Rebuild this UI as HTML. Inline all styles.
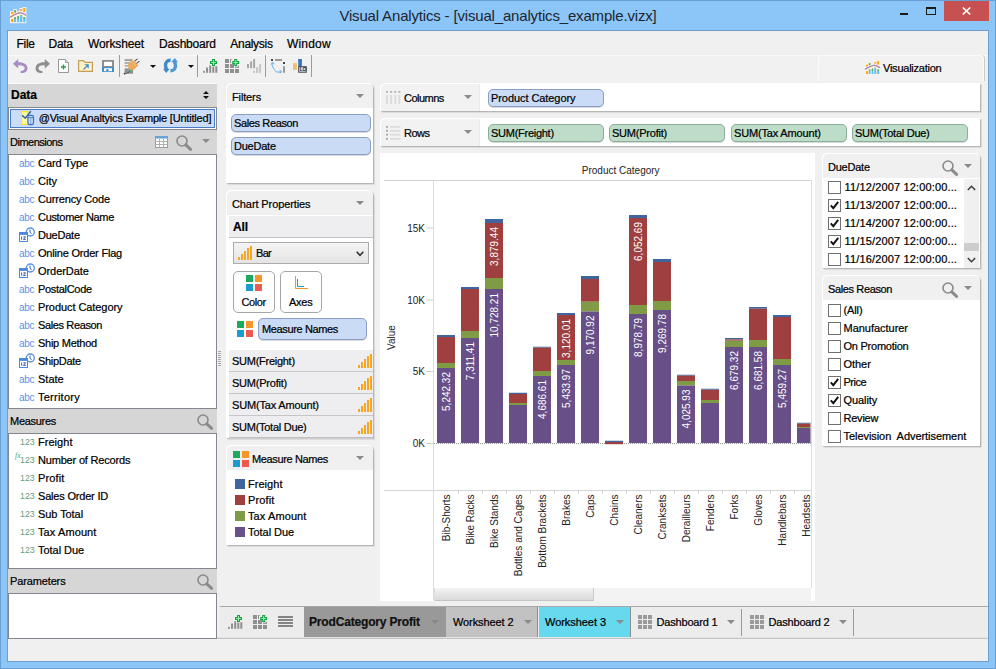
<!DOCTYPE html><html><head><meta charset="utf-8"><title>Visual Analytics</title><style>
*{box-sizing:border-box;margin:0;padding:0}
html,body{width:996px;height:669px;overflow:hidden;background:#8cc5f7}
body{font-family:"Liberation Sans",sans-serif;font-size:11px;color:#000;position:relative;letter-spacing:-0.2px}
.abs{position:absolute}
.t{position:absolute;white-space:pre;line-height:14px;height:14px;-webkit-text-stroke:0.22px currentColor}
#frame{position:absolute;left:0;top:0;width:996px;height:669px;background:#8cc5f7;border:1px solid #6a9fd4}
#client{position:absolute;left:7px;top:30px;width:982px;height:632px;background:#f0f0f0;border:1px solid #6f9ecf;box-shadow:inset 1px 0 0 #faf6f0,inset 0 -1px 0 #faf6f0}
.hdr{position:absolute;background:#d6d6d6}
.listbox{position:absolute;background:#fff;border:1px solid #828790}
.card{position:absolute;background:#fff;border-radius:5px 5px 0 0;box-shadow:1px 1px 1px rgba(0,0,0,.2),2px 2px 1px rgba(0,0,0,.07)}
.card .ch{position:absolute;left:0;top:0;right:0;background:#f0f0f0;border-radius:5px 5px 0 0}
.pill{position:absolute;height:18px;border-radius:5px;border:1px solid #8b9ec6;background:#cadbf6;box-shadow:0 1px 0 rgba(0,0,0,.15)}
.pill.g{border-color:#8dae9b;background:#bdddc9}
.pill span{position:absolute;left:3px;top:1px;line-height:14px;white-space:pre;-webkit-text-stroke:0.22px currentColor}
.abc{position:absolute;color:#5e92e6;font-size:10px;letter-spacing:-0.3px;line-height:14px}
.n123{position:absolute;color:#5fa080;font-size:8.8px;letter-spacing:0;line-height:14px}
.cb{position:absolute;width:13px;height:13px;background:#fff;border:1px solid #707070}
.arr{position:absolute;width:0;height:0;border-left:4px solid transparent;border-right:4px solid transparent;border-top:4px solid #7a7a7a}
svg{position:absolute;overflow:visible}
.ct{font-family:"Liberation Sans",sans-serif;font-size:10px;letter-spacing:0}
</style></head><body>
<div id="frame"></div>
<div class="t" style="left:339px;top:6px;width:318px;text-align:center;font-size:15px;line-height:19px;height:19px;letter-spacing:-0.17px;color:#1c2530;-webkit-text-stroke:0">Visual Analytics - [visual_analytics_example.vizx]</div>
<svg style="left:9.8px;top:6.9px" width="16.3" height="16.2" viewBox="0 0 16.3 16.2"><g fill="#fdf6ec"><rect x="0" y="4.2" width="3.6" height="12"/><rect x="3.4" y="2.1" width="3.4" height="14.1"/><rect x="6.6" y="4.4" width="3" height="11.8"/><rect x="9.4" y="1.1" width="3.3" height="15.1"/><rect x="12.5" y="0" width="3.8" height="16.2"/></g>
<g fill="#ffa514"><rect x="1" y="5" width="2.3" height="2"/><rect x="1" y="12" width="2.3" height="3.2"/><rect x="10.1" y="2.1" width="2.1" height="1.8"/><rect x="13.2" y="0.9" width="2.2" height="4.1"/></g>
<g fill="#62b06a"><rect x="4.1" y="3.1" width="1.9" height="2.7"/><rect x="4.1" y="10.1" width="1.9" height="2"/><rect x="7.2" y="9.1" width="1.9" height="3"/><rect x="10.1" y="8.2" width="2.1" height="1"/><rect x="13.2" y="10.1" width="2.2" height="2"/></g>
<g fill="#5cc0f8"><rect x="4.1" y="12" width="1.9" height="3.2"/><rect x="7.2" y="12" width="1.9" height="3.2"/><rect x="10.1" y="9.1" width="2.1" height="6.1"/><rect x="13.2" y="12" width="2.2" height="3.2"/></g>
<path d="M0 10.2 Q6 6.4 10 5.7 Q13 5.9 16.3 8.4" fill="none" stroke="#fde3d6" stroke-width="2.2"/>
<path d="M0 10.2 Q6 6.4 10 5.7 Q13 5.9 16.3 8.4" fill="none" stroke="#7f6acb" stroke-width="1.1"/>
<path d="M0 10.2 Q6 6.4 10 5.7 Q13 5.9 16.3 8.4" fill="none" stroke="#f6a98a" stroke-width="1.1" stroke-dasharray="1 1.3"/></svg>
<div class="abs" style="left:900px;top:13px;width:8px;height:2px;background:#1a1a1a"></div>
<div class="abs" style="left:926px;top:7px;width:10px;height:8px;border:1px solid #1a1a1a;border-top-width:2px"></div>
<div class="abs" style="left:944px;top:1px;width:45px;height:20px;background:#c75050"></div>
<svg style="left:962px;top:7px" width="9" height="8" viewBox="0 0 9 8"><path d="M0.8 0.5 L8.2 7.5 M8.2 0.5 L0.8 7.5" stroke="#fff" stroke-width="1.7" fill="none"/></svg>
<div id="client"></div>
<div class="t" style="left:16.5px;top:36px;font-size:12px;line-height:16px;height:16px;letter-spacing:-0.284px">File</div>
<div class="t" style="left:48.6px;top:36px;font-size:12px;line-height:16px;height:16px;letter-spacing:-0.337px">Data</div>
<div class="t" style="left:88px;top:36px;font-size:12px;line-height:16px;height:16px;letter-spacing:-0.126px">Worksheet</div>
<div class="t" style="left:159px;top:36px;font-size:12px;line-height:16px;height:16px;letter-spacing:-0.234px">Dashboard</div>
<div class="t" style="left:230.3px;top:36px;font-size:12px;line-height:16px;height:16px;letter-spacing:-0.298px">Analysis</div>
<div class="t" style="left:287px;top:36px;font-size:12px;line-height:16px;height:16px;letter-spacing:0.187px">Window</div>
<div class="abs" style="left:8px;top:55px;width:980px;height:26px;background:#f1f1f1;border-top:1px solid #fafafa"></div><svg style="left:12px;top:58px" width="17" height="16" viewBox="0 0 17 16">
<path d="M6.2 1 L1 5.8 L6.2 10.6 L6.2 7.4 C10.5 7 13 8.3 12.6 10.6 C12.3 12.4 10.6 13.2 8.6 13 L8.6 15 C12.4 15.4 15.3 13.6 15.4 10.4 C15.5 6.4 11.6 4.1 6.2 4.3 Z" fill="#a98bc4"/></svg>
<svg style="left:34px;top:58px" width="17" height="16" viewBox="0 0 17 16">
<path d="M10.8 1 L16 5.8 L10.8 10.6 L10.8 7.4 C6.5 7 4 8.3 4.4 10.6 C4.7 12.4 6.4 13.2 8.4 13 L8.4 15 C4.6 15.4 1.7 13.6 1.6 10.4 C1.5 6.4 5.4 4.1 10.8 4.3 Z" fill="#8e8e8e"/></svg>
<svg style="left:58px;top:59px" width="12" height="14" viewBox="0 0 12 14">
<path d="M0.5 0.5 H7.5 L10.5 3.5 V13.5 H0.5 Z" fill="#fff" stroke="#9a9a9a"/><path d="M7.5 0.5 V3.5 H10.5" fill="#e8e8e8" stroke="#9a9a9a"/>
<path d="M5.5 5.5 V10.5 M3 8 H8" stroke="#2e9a3c" stroke-width="1.4"/></svg>
<svg style="left:78px;top:60px" width="16" height="12" viewBox="0 0 16 12">
<path d="M0.6 0.6 H5.5 L7 2.4 H14.4 V11.4 H0.6 Z" fill="#fdf1c9" stroke="#c69c5a" stroke-width="1.2"/>
<path d="M5.5 9.5 L10 5 M6.8 4.8 H10.2 V8.2" stroke="#3f86c5" stroke-width="1.1" fill="none"/></svg>
<svg style="left:102px;top:60px" width="12" height="12" viewBox="0 0 12 12">
<rect x="0" y="0" width="12" height="7" fill="#8e8e8e"/><rect x="2" y="1.8" width="8" height="4.2" rx="0.6" fill="#fff"/>
<path d="M0 7 H12 V12 H0.8 L0 11.2 Z" fill="#3e8fcc"/><rect x="2" y="8.2" width="8" height="3" fill="#fff"/><rect x="4.2" y="9.2" width="2.3" height="2" fill="#3e8fcc"/></svg>
<div class="abs" style="left:119px;top:55px;width:1px;height:22px;background:#9b9b9b"></div>
<svg style="left:123px;top:58px" width="18" height="16" viewBox="0 0 18 16">
<rect x="1.6" y="1.4" width="8" height="1.3" fill="#7c7c7c"/><rect x="1.6" y="4.3" width="5" height="1.3" fill="#8a8a8a"/><rect x="1.6" y="7.2" width="3.4" height="1.3" fill="#9a9a9a"/>
<rect x="1.6" y="10.4" width="8.4" height="5.3" fill="#909090"/>
<path d="M7.4 12.8 L0.9 16" stroke="#4a4a4a" stroke-width="1.5"/><path d="M7.6 12.2 L2 15" stroke="#d8d8d8" stroke-width="0.6"/>
<path d="M11.4 3.4 L14.4 0.9 M13.4 5.6 L16.4 3.1" stroke="#555" stroke-width="1.2"/>
<ellipse cx="9.3" cy="7.6" rx="4.2" ry="4.5" transform="rotate(40 9.3 7.6)" fill="#eba95a"/>
<path d="M8 2.4 L14.6 8.4" stroke="#eba95a" stroke-width="2.4"/><path d="M8.6 3.6 L13.4 8" stroke="#f6d3a2" stroke-width="0.6"/>
<rect x="6.9" y="12.4" width="1.3" height="1.3" fill="#2fd04a"/></svg>
<div class="arr" style="left:150px;top:65px;border-left-width:3px;border-right-width:3px;border-top:3px solid #111"></div>
<svg style="left:163px;top:58px" width="15" height="15" viewBox="0 0 15 15">
<path d="M7.6 2.2 C4 2 2.5 4.8 2.5 7.2 C2.5 8.8 3 10.2 3.9 11.4" fill="none" stroke="#3f8acb" stroke-width="3.4"/>
<path d="M0 10.8 H6.8 L3.2 14.9 Z" fill="#3f8acb"/>
<path d="M7.4 12.8 C11 13 12.5 10.2 12.5 7.8 C12.5 6.2 12 4.8 11.1 3.6" fill="none" stroke="#4f97d4" stroke-width="3.4"/>
<path d="M15 4.2 H8.2 L11.8 0.1 Z" fill="#4f97d4"/></svg>
<div class="arr" style="left:188px;top:65px;border-left-width:3px;border-right-width:3px;border-top:3px solid #111"></div>
<div class="abs" style="left:197px;top:55px;width:1px;height:22px;background:#9b9b9b"></div>
<svg style="left:203px;top:59px" width="15" height="14" viewBox="0 0 15 14">
<g fill="#8f8f8f"><rect x="0" y="11.8" width="1.8" height="2"/><rect x="3" y="8.5" width="2" height="5.3"/><rect x="6.2" y="6.4" width="2" height="7.4"/><rect x="9.3" y="7.6" width="2" height="6.2"/><rect x="12.3" y="7.2" width="2" height="6.6"/></g>
<path d="M10.5 0.0 V7.0 M7.0 3.5 H14.0" stroke="#17a046" stroke-width="3"/><path d="M10.5 1.1 V5.9 M8.1 3.5 H12.9" stroke="#8cf0a2" stroke-width="1.1"/></svg>
<svg style="left:225px;top:59px" width="15" height="14" viewBox="0 0 15 14">
<g fill="#8f8f8f"><rect x="0" y="0" width="4" height="4"/><rect x="5" y="0" width="1.6" height="1"/><rect x="5" y="0" width="1" height="4"/><rect x="0" y="5" width="4" height="4"/><rect x="5" y="5" width="4" height="4"/><rect x="10" y="7.6" width="4" height="1.2"/><rect x="13" y="6.8" width="1" height="2"/><rect x="0" y="10" width="4" height="4"/><rect x="5" y="10" width="4" height="4"/><rect x="10" y="10" width="4" height="4"/></g>
<path d="M10.7 0.0 V7.0 M7.199999999999999 3.5 H14.2" stroke="#17a046" stroke-width="3"/><path d="M10.7 1.1 V5.9 M8.299999999999999 3.5 H13.1" stroke="#8cf0a2" stroke-width="1.1"/></svg>
<svg style="left:247px;top:59px" width="15" height="14" viewBox="0 0 15 14">
<g fill="#a6a6a6"><rect x="0" y="5" width="2" height="4.2"/><rect x="3.1" y="2.4" width="2" height="6.8"/><rect x="6.1" y="0" width="2" height="9.2"/></g>
<g fill="#c4c4c4"><rect x="6.1" y="12" width="2" height="1.9"/><rect x="9.1" y="8.2" width="2" height="5.7"/><rect x="12.1" y="5.2" width="2" height="8.7"/></g></svg>
<div class="abs" style="left:265px;top:55px;width:1px;height:22px;background:#9b9b9b"></div>
<svg style="left:271px;top:59px" width="15" height="14" viewBox="0 0 15 14">
<rect x="0" y="0" width="2" height="2" fill="#444"/><rect x="4" y="0" width="7" height="2" fill="#9a9a9a"/>
<rect x="12" y="3" width="2" height="2" fill="#444"/><rect x="12" y="7.2" width="2" height="6.6" fill="#9a9a9a"/>
<path d="M1.2 4 C0.6 6.5 2 9 5.4 13 H10.2" fill="none" stroke="#63aee8" stroke-width="1"/><path d="M0.2 5.6 L1.3 3.4 L3.4 5" fill="none" stroke="#63aee8" stroke-width="1"/><path d="M8.6 10.8 L10.6 13 L8.6 14" fill="none" stroke="#63aee8" stroke-width="1"/></svg>
<svg style="left:293px;top:59px" width="15" height="15" viewBox="0 0 15 15">
<rect x="0" y="4.1" width="4" height="6.8" fill="#ecc27a"/><rect x="5.2" y="0" width="3.7" height="8" fill="#3b73b9"/>
<rect x="5.7" y="7.7" width="7.6" height="5.5" fill="#dfe8f6" stroke="#444" stroke-width="1"/>
<text x="6.7" y="12.2" font-family="Liberation Sans, sans-serif" font-size="4.8" font-weight="bold" fill="#0f1f4a" letter-spacing="0">LO</text></svg>
<div class="abs" style="left:311px;top:55px;width:1px;height:22px;background:#9b9b9b"></div>
<div class="abs" style="left:818px;top:55px;width:166px;height:26px;background:#f2f2f2;border:1px solid #fbfbfb;border-bottom:none;border-radius:4px 4px 0 0;box-shadow:1px 0 0 #c9c9c9"></div>
<svg style="left:864.5px;top:59.5px" width="15" height="15" viewBox="0 0 16.3 16.2"><g fill="#fdf6ec"><rect x="0" y="4.2" width="3.6" height="12"/><rect x="3.4" y="2.1" width="3.4" height="14.1"/><rect x="6.6" y="4.4" width="3" height="11.8"/><rect x="9.4" y="1.1" width="3.3" height="15.1"/><rect x="12.5" y="0" width="3.8" height="16.2"/></g>
<g fill="#ffa514"><rect x="1" y="5" width="2.3" height="2"/><rect x="1" y="12" width="2.3" height="3.2"/><rect x="10.1" y="2.1" width="2.1" height="1.8"/><rect x="13.2" y="0.9" width="2.2" height="4.1"/></g>
<g fill="#62b06a"><rect x="4.1" y="3.1" width="1.9" height="2.7"/><rect x="4.1" y="10.1" width="1.9" height="2"/><rect x="7.2" y="9.1" width="1.9" height="3"/><rect x="10.1" y="8.2" width="2.1" height="1"/><rect x="13.2" y="10.1" width="2.2" height="2"/></g>
<g fill="#5cc0f8"><rect x="4.1" y="12" width="1.9" height="3.2"/><rect x="7.2" y="12" width="1.9" height="3.2"/><rect x="10.1" y="9.1" width="2.1" height="6.1"/><rect x="13.2" y="12" width="2.2" height="3.2"/></g>
<path d="M0 10.2 Q6 6.4 10 5.7 Q13 5.9 16.3 8.4" fill="none" stroke="#fde3d6" stroke-width="2.2"/>
<path d="M0 10.2 Q6 6.4 10 5.7 Q13 5.9 16.3 8.4" fill="none" stroke="#7f6acb" stroke-width="1.1"/>
<path d="M0 10.2 Q6 6.4 10 5.7 Q13 5.9 16.3 8.4" fill="none" stroke="#f6a98a" stroke-width="1.1" stroke-dasharray="1 1.3"/></svg>
<div class="t" style="left:883px;top:61px;letter-spacing:-0.235px;">Visualization</div><div class="abs" style="left:8px;top:83px;width:209px;height:1px;background:#fbfbfb"></div>
<div class="hdr" style="left:8px;top:84px;width:209px;height:556px"></div>
<div class="t" style="left:11px;top:88px;font-weight:bold;font-size:12px;letter-spacing:0">Data</div>
<svg style="left:202.5px;top:91px" width="6" height="8" viewBox="0 0 6 8"><path d="M3 0 L6 3 H0 Z M0 5 H6 L3 8 Z" fill="#111"/></svg>
<div class="listbox" style="left:8px;top:107px;width:209px;height:23px"></div>
<div class="abs" style="left:10px;top:109px;width:205px;height:19px;background:#cbdcf6;border:1px solid #4a7ac8"></div>
<svg style="left:21px;top:111px" width="14" height="14" viewBox="0 0 14 14">
<rect x="0.6" y="0.6" width="6.4" height="12.8" fill="#fffca8" stroke="#ffe030" stroke-width="1.2"/>
<path d="M1.2 4.4 L4.3 7.2 L9.8 0.3" fill="none" stroke="#2f5fa8" stroke-width="1.5"/>
<rect x="6.9" y="4.4" width="5.6" height="9.2" rx="1.6" fill="#c5d8f2" stroke="#3a76be" stroke-width="1.2"/><path d="M6.9 6.6 H12.5" stroke="#3a76be" stroke-width="0.9"/><path d="M9.7 7 V13" stroke="#7ea6da" stroke-width="1"/></svg>
<div class="t" style="left:38.7px;top:111px;letter-spacing:-0.198px;">@Visual Analtyics Example [Untitled]</div>
<div class="t" style="left:10px;top:135px;letter-spacing:-0.497px;">Dimensions</div>
<svg style="left:155px;top:136px" width="13" height="12" viewBox="0 0 13 12">
<rect x="0.5" y="0.5" width="12" height="11" fill="#fff" stroke="#9a9a9a"/><rect x="0.5" y="0.5" width="12" height="2" fill="#5aa3e6"/>
<path d="M0.5 5.5 H12.5 M0.5 8.5 H12.5 M4.5 2.5 V11.5 M8.5 2.5 V11.5" stroke="#b0b0b0" stroke-width="1"/></svg>
<svg style="left:175px;top:134px" width="18" height="18" viewBox="0 0 18 18"><circle cx="7" cy="7" r="5" fill="none" stroke="#8a8a8a" stroke-width="1.6"/><path d="M10.8 10.9 L15.6 15.4" stroke="#8a8a8a" stroke-width="2.9" stroke-linecap="round"/></svg>
<svg style="left:201.5px;top:139px" width="8" height="4" viewBox="0 0 8 4"><path d="M0 0 H8 L4 4 Z" fill="#8a8a8a"/></svg>
<div class="listbox" style="left:8px;top:154px;width:209px;height:255px"></div>
<div class="abc" style="left:19px;top:156.5px">abc</div>
<div class="t" style="left:38px;top:156px;letter-spacing:-0.061px;">Card Type</div>
<div class="abc" style="left:19px;top:174.5px">abc</div>
<div class="t" style="left:38px;top:174px;letter-spacing:0.014px;">City</div>
<div class="abc" style="left:19px;top:192.5px">abc</div>
<div class="t" style="left:38px;top:192px;letter-spacing:-0.152px;">Currency Code</div>
<div class="abc" style="left:19px;top:210.5px">abc</div>
<div class="t" style="left:38px;top:210px;letter-spacing:-0.314px;">Customer Name</div>
<svg style="left:18.7px;top:227px" width="17" height="16" viewBox="0 0 17 16">
<circle cx="11.3" cy="5" r="4" fill="#fff" stroke="#5b93e0" stroke-width="1.4"/><path d="M11 2.6 V5.4 L12.6 6.6" fill="none" stroke="#2f62b8" stroke-width="1"/>
<rect x="0.5" y="5.5" width="8" height="9" fill="#fff" stroke="#4d88dd"/><rect x="0.5" y="5.5" width="8" height="2.4" fill="#4d88dd"/>
<path d="M2.6 9.6 V12.6 M4.4 9.8 H6.6 L4.4 12.4 H6.8" fill="none" stroke="#2f62b8" stroke-width="1"/></svg>
<div class="t" style="left:38px;top:228px;letter-spacing:-0.231px;">DueDate</div>
<div class="abc" style="left:19px;top:246.5px">abc</div>
<div class="t" style="left:38px;top:246px;letter-spacing:-0.201px;">Online Order Flag</div>
<svg style="left:18.7px;top:263px" width="17" height="16" viewBox="0 0 17 16">
<circle cx="11.3" cy="5" r="4" fill="#fff" stroke="#5b93e0" stroke-width="1.4"/><path d="M11 2.6 V5.4 L12.6 6.6" fill="none" stroke="#2f62b8" stroke-width="1"/>
<rect x="0.5" y="5.5" width="8" height="9" fill="#fff" stroke="#4d88dd"/><rect x="0.5" y="5.5" width="8" height="2.4" fill="#4d88dd"/>
<path d="M2.6 9.6 V12.6 M4.4 9.8 H6.6 L4.4 12.4 H6.8" fill="none" stroke="#2f62b8" stroke-width="1"/></svg>
<div class="t" style="left:38px;top:264px;letter-spacing:-0.061px;">OrderDate</div>
<div class="abc" style="left:19px;top:282.5px">abc</div>
<div class="t" style="left:38px;top:282px;letter-spacing:-0.307px;">PostalCode</div>
<div class="abc" style="left:19px;top:300.5px">abc</div>
<div class="t" style="left:38px;top:300px;letter-spacing:-0.069px;">Product Category</div>
<div class="abc" style="left:19px;top:318.5px">abc</div>
<div class="t" style="left:38px;top:318px;letter-spacing:-0.374px;">Sales Reason</div>
<div class="abc" style="left:19px;top:336.5px">abc</div>
<div class="t" style="left:38px;top:336px;letter-spacing:-0.26px;">Ship Method</div>
<svg style="left:18.7px;top:353px" width="17" height="16" viewBox="0 0 17 16">
<circle cx="11.3" cy="5" r="4" fill="#fff" stroke="#5b93e0" stroke-width="1.4"/><path d="M11 2.6 V5.4 L12.6 6.6" fill="none" stroke="#2f62b8" stroke-width="1"/>
<rect x="0.5" y="5.5" width="8" height="9" fill="#fff" stroke="#4d88dd"/><rect x="0.5" y="5.5" width="8" height="2.4" fill="#4d88dd"/>
<path d="M2.6 9.6 V12.6 M4.4 9.8 H6.6 L4.4 12.4 H6.8" fill="none" stroke="#2f62b8" stroke-width="1"/></svg>
<div class="t" style="left:38px;top:354px;letter-spacing:-0.306px;">ShipDate</div>
<div class="abc" style="left:19px;top:372.5px">abc</div>
<div class="t" style="left:38px;top:372px;letter-spacing:0.003px;">State</div>
<div class="abc" style="left:19px;top:390.5px">abc</div>
<div class="t" style="left:38px;top:390px;letter-spacing:0.242px;">Territory</div>
<div class="t" style="left:10px;top:414px;letter-spacing:-0.287px;">Measures</div>
<svg style="left:196px;top:413px" width="18" height="18" viewBox="0 0 18 18"><circle cx="7" cy="7" r="5" fill="none" stroke="#8a8a8a" stroke-width="1.6"/><path d="M10.8 10.9 L15.6 15.4" stroke="#8a8a8a" stroke-width="2.9" stroke-linecap="round"/></svg>
<div class="listbox" style="left:8px;top:433px;width:209px;height:136px"></div>
<div class="n123" style="left:20px;top:435px">123</div>
<div class="t" style="left:38px;top:435px;letter-spacing:0.038px;">Freight</div>
<div class="abs" style="left:15px;top:451px;font-family:'Liberation Serif',serif;font-style:italic;font-size:8px;color:#5c9b7c;line-height:10px;letter-spacing:0">fx</div>
<div class="n123" style="left:20px;top:453px">123</div>
<div class="t" style="left:38px;top:453px;letter-spacing:-0.186px;">Number of Records</div>
<div class="n123" style="left:20px;top:471px">123</div>
<div class="t" style="left:38px;top:471px;letter-spacing:0.138px;">Profit</div>
<div class="n123" style="left:20px;top:489px">123</div>
<div class="t" style="left:38px;top:489px;letter-spacing:-0.196px;">Sales Order ID</div>
<div class="n123" style="left:20px;top:507px">123</div>
<div class="t" style="left:38px;top:507px;letter-spacing:-0.074px;">Sub Total</div>
<div class="n123" style="left:20px;top:525px">123</div>
<div class="t" style="left:38px;top:525px;letter-spacing:0.102px;">Tax Amount</div>
<div class="n123" style="left:20px;top:543px">123</div>
<div class="t" style="left:38px;top:543px;letter-spacing:-0.03px;">Total Due</div>
<div class="t" style="left:10px;top:574px;letter-spacing:-0.135px;">Parameters</div>
<svg style="left:196px;top:573px" width="18" height="18" viewBox="0 0 18 18"><circle cx="7" cy="7" r="5" fill="none" stroke="#8a8a8a" stroke-width="1.6"/><path d="M10.8 10.9 L15.6 15.4" stroke="#8a8a8a" stroke-width="2.9" stroke-linecap="round"/></svg>
<div class="listbox" style="left:8px;top:593px;width:209px;height:46px"></div>
<div class="abs" style="left:218px;top:351px;width:3px;height:15px;background:repeating-linear-gradient(#a8a8a8 0 1px,#f0f0f0 1px 2px)"></div><div class="card" style="left:226px;top:83px;width:147px;height:100px"><div class="ch" style="height:24px;margin:1px 0 0 1px"></div></div>
<div class="t" style="left:232px;top:90px;letter-spacing:-0.135px;">Filters</div>
<svg style="left:356px;top:94px" width="8" height="4" viewBox="0 0 8 4"><path d="M0 0 H8 L4 4 Z" fill="#8a8a8a"/></svg>
<div class="pill" style="left:231px;top:114px;width:140px;height:18px"><span style="left:2px;top:1px;letter-spacing:-0.374px">Sales Reason</span></div>
<div class="pill" style="left:231px;top:137px;width:140px;height:18px"><span style="left:2px;top:1px;letter-spacing:-0.231px">DueDate</span></div>
<div class="card" style="left:226px;top:190px;width:147px;height:248px"><div class="ch" style="height:24px;margin:1px 0 0 1px"></div></div>
<div class="t" style="left:232px;top:197px;letter-spacing:-0.099px;">Chart Properties</div>
<svg style="left:356px;top:201px" width="8" height="4" viewBox="0 0 8 4"><path d="M0 0 H8 L4 4 Z" fill="#8a8a8a"/></svg>
<div class="abs" style="left:229px;top:216px;width:144px;height:22px;background:#eeeef1;border-bottom:1px solid #c4c4c4"></div>
<div class="t" style="left:233px;top:220px;font-weight:bold;font-size:12px;letter-spacing:-0.1px">All</div>
<div class="abs" style="left:233px;top:242px;width:136px;height:22px;border:1px solid #acacac;background:linear-gradient(#f4f4f4,#e4e4e4)"></div>
<svg style="left:238px;top:246px" width="14" height="14" viewBox="0 0 14 14"><g fill="#f5a623"><rect x="0" y="11" width="2" height="3"/><rect x="3" y="8" width="2" height="6"/><rect x="6" y="5" width="2" height="9"/><rect x="9" y="2" width="2" height="12"/><rect x="12" y="0" width="2" height="14"/></g></svg>
<div class="t" style="left:256px;top:246px;letter-spacing:-0.673px;">Bar</div>
<svg style="left:356px;top:251px" width="8" height="6" viewBox="0 0 8 6"><path d="M0.7 0.8 L4 4.4 L7.3 0.8" fill="none" stroke="#333" stroke-width="1.6"/></svg>
<div class="abs" style="left:233px;top:271px;width:42px;height:42px;border:1px solid #a6a6a6;border-radius:5px;background:#fff"></div>
<div class="abs" style="left:246px;top:275px;width:7px;height:7px;background:#1daa5c"></div><div class="abs" style="left:255px;top:275px;width:7px;height:7px;background:#f5962d"></div><div class="abs" style="left:246px;top:284px;width:7px;height:7px;background:#1c9bd0"></div><div class="abs" style="left:255px;top:284px;width:7px;height:7px;background:#ee5a4f"></div>
<div class="t" style="left:241.5px;top:295px;letter-spacing:-0.417px;">Color</div>
<div class="abs" style="left:280px;top:271px;width:42px;height:42px;border:1px solid #a6a6a6;border-radius:5px;background:#fff"></div>
<svg style="left:295px;top:276px" width="13" height="13" viewBox="0 0 13 13"><path d="M0.5 0 V12.5 H13" fill="none" stroke="#f5962d" stroke-width="1"/><path d="M2.5 3 V10.5 H9" fill="none" stroke="#1c9bd0" stroke-width="1"/></svg>
<div class="t" style="left:289px;top:295px;letter-spacing:-0.239px;">Axes</div>
<div class="abs" style="left:237px;top:321px;width:7px;height:7px;background:#1daa5c"></div><div class="abs" style="left:246px;top:321px;width:7px;height:7px;background:#f5962d"></div><div class="abs" style="left:237px;top:330px;width:7px;height:7px;background:#1c9bd0"></div><div class="abs" style="left:246px;top:330px;width:7px;height:7px;background:#ee5a4f"></div>
<div class="pill" style="left:258px;top:318px;width:109px;height:22px"><span style="left:3px;top:3px;letter-spacing:-0.361px">Measure Names</span></div>
<div class="abs" style="left:229px;top:350px;width:144px;height:22px;background:#eeeef1;border-bottom:1px solid #c6c6c6"></div>
<div class="t" style="left:232px;top:354px;letter-spacing:-0.267px;">SUM(Freight)</div>
<svg style="left:358px;top:354px" width="14" height="14" viewBox="0 0 14 14"><g fill="#f5a623"><rect x="0" y="11" width="2" height="3"/><rect x="3" y="8" width="2" height="6"/><rect x="6" y="5" width="2" height="9"/><rect x="9" y="2" width="2" height="12"/><rect x="12" y="0" width="2" height="14"/></g></svg>
<div class="abs" style="left:229px;top:372px;width:144px;height:22px;background:#eeeef1;border-bottom:1px solid #c6c6c6"></div>
<div class="t" style="left:232px;top:376px;letter-spacing:-0.222px;">SUM(Profit)</div>
<svg style="left:358px;top:376px" width="14" height="14" viewBox="0 0 14 14"><g fill="#f5a623"><rect x="0" y="11" width="2" height="3"/><rect x="3" y="8" width="2" height="6"/><rect x="6" y="5" width="2" height="9"/><rect x="9" y="2" width="2" height="12"/><rect x="12" y="0" width="2" height="14"/></g></svg>
<div class="abs" style="left:229px;top:394px;width:144px;height:22px;background:#eeeef1;border-bottom:1px solid #c6c6c6"></div>
<div class="t" style="left:232px;top:398px;letter-spacing:-0.163px;">SUM(Tax Amount)</div>
<svg style="left:358px;top:398px" width="14" height="14" viewBox="0 0 14 14"><g fill="#f5a623"><rect x="0" y="11" width="2" height="3"/><rect x="3" y="8" width="2" height="6"/><rect x="6" y="5" width="2" height="9"/><rect x="9" y="2" width="2" height="12"/><rect x="12" y="0" width="2" height="14"/></g></svg>
<div class="abs" style="left:229px;top:416px;width:144px;height:22px;background:#eeeef1;border-bottom:1px solid #c6c6c6"></div>
<div class="t" style="left:232px;top:420px;letter-spacing:-0.267px;">SUM(Total Due)</div>
<svg style="left:358px;top:420px" width="14" height="14" viewBox="0 0 14 14"><g fill="#f5a623"><rect x="0" y="11" width="2" height="3"/><rect x="3" y="8" width="2" height="6"/><rect x="6" y="5" width="2" height="9"/><rect x="9" y="2" width="2" height="12"/><rect x="12" y="0" width="2" height="14"/></g></svg>
<div class="abs" style="left:229px;top:437px;width:144px;height:2px;background:linear-gradient(#b9b9b9,#d6d6d6)"></div>
<div class="card" style="left:226px;top:445px;width:147px;height:100px"><div class="ch" style="height:24px;margin:1px 0 0 1px"></div></div>
<div class="abs" style="left:233px;top:451px;width:7px;height:7px;background:#1daa5c"></div><div class="abs" style="left:242px;top:451px;width:7px;height:7px;background:#f5962d"></div><div class="abs" style="left:233px;top:460px;width:7px;height:7px;background:#1c9bd0"></div><div class="abs" style="left:242px;top:460px;width:7px;height:7px;background:#ee5a4f"></div>
<div class="t" style="left:252px;top:452px;letter-spacing:-0.361px;">Measure Names</div>
<svg style="left:356px;top:456px" width="8" height="4" viewBox="0 0 8 4"><path d="M0 0 H8 L4 4 Z" fill="#8a8a8a"/></svg>
<div class="abs" style="left:235px;top:479px;width:10px;height:10px;background:#3f659f"></div>
<div class="t" style="left:248px;top:477px;letter-spacing:0.038px;">Freight</div>
<div class="abs" style="left:235px;top:495px;width:10px;height:10px;background:#9f3f3f"></div>
<div class="t" style="left:248px;top:493px;letter-spacing:0.138px;">Profit</div>
<div class="abs" style="left:235px;top:511px;width:10px;height:10px;background:#7f9b45"></div>
<div class="t" style="left:248px;top:509px;letter-spacing:0.102px;">Tax Amount</div>
<div class="abs" style="left:235px;top:527px;width:10px;height:10px;background:#684f88"></div>
<div class="t" style="left:248px;top:525px;letter-spacing:-0.03px;">Total Due</div><div class="card" style="left:380px;top:83px;width:600px;height:28px;border-radius:5px 0 0 0"><div class="abs" style="left:1px;top:1px;width:99px;height:27px;background:#f2f2f2;border-radius:5px 0 0 0;border-right:1px solid #eceadf"></div></div>
<svg style="left:385.8px;top:91.2px" width="15" height="14" viewBox="0 0 15 14"><g fill="#dcdcdc"><rect x="0" y="3.9" width="2" height="9.2"/><rect x="4.1" y="3.9" width="2" height="9.2"/><rect x="8.2" y="3.9" width="2" height="9.2"/><rect x="12.3" y="3.9" width="2" height="9.2"/></g><g fill="#b2b2b2"><rect x="0" y="0" width="2" height="1.7"/><rect x="4.1" y="0" width="2" height="1.7"/><rect x="8.2" y="0" width="2" height="1.7"/><rect x="12.3" y="0" width="2" height="1.7"/></g></svg>
<div class="t" style="left:404px;top:91px;letter-spacing:-0.522px;">Columns</div>
<svg style="left:464px;top:95px" width="8" height="4" viewBox="0 0 8 4"><path d="M0 0 H8 L4 4 Z" fill="#8a8a8a"/></svg>
<div class="card" style="left:380px;top:118px;width:600px;height:28px;border-radius:5px 0 0 0"><div class="abs" style="left:1px;top:1px;width:99px;height:27px;background:#f2f2f2;border-radius:5px 0 0 0;border-right:1px solid #eceadf"></div></div>
<svg style="left:385.8px;top:126.1px" width="15" height="14" viewBox="0 0 15 14"><g fill="#dcdcdc"><rect x="4.2" y="0" width="10.2" height="1.8"/><rect x="4.2" y="3.9" width="10.2" height="1.8"/><rect x="4.2" y="7.8" width="10.2" height="1.8"/><rect x="4.2" y="11.9" width="10.2" height="1.8"/></g><g fill="#a8a8a8"><rect x="0" y="0" width="2" height="1.8"/><rect x="0" y="3.9" width="2" height="1.8"/><rect x="0" y="7.8" width="2" height="1.8"/><rect x="0" y="11.9" width="2" height="1.8"/></g></svg>
<div class="t" style="left:404px;top:126px;letter-spacing:-0.501px;">Rows</div>
<svg style="left:464px;top:130px" width="8" height="4" viewBox="0 0 8 4"><path d="M0 0 H8 L4 4 Z" fill="#8a8a8a"/></svg>
<div class="pill" style="left:488px;top:89px;width:116px;height:18px"><span style="left:2px;top:1px;letter-spacing:-0.069px">Product Category</span></div>
<div class="pill g" style="left:488px;top:124px;width:116px;height:18px"><span style="left:2px;top:1px;letter-spacing:-0.267px">SUM(Freight)</span></div>
<div class="pill g" style="left:609px;top:124px;width:116px;height:18px"><span style="left:2px;top:1px;letter-spacing:-0.222px">SUM(Profit)</span></div>
<div class="pill g" style="left:731px;top:124px;width:116px;height:18px"><span style="left:2px;top:1px;letter-spacing:-0.163px">SUM(Tax Amount)</span></div>
<div class="pill g" style="left:852px;top:124px;width:116px;height:18px"><span style="left:2px;top:1px;letter-spacing:-0.267px">SUM(Total Due)</span></div>
<div class="abs" style="left:380px;top:153px;width:435px;height:448px;background:#fff"></div>
<svg style="left:0;top:0" width="996" height="669" viewBox="0 0 996 669" class="ct"><text x="620.7" y="174.3" text-anchor="middle" font-size="10" fill="#222">Product Category</text><path d="M384 180.5 H811.5 M384 490.5 H811.5" stroke="#d4d4d4" stroke-width="1" fill="none"/><path d="M433.5 181 V600 M811.5 181 V588" stroke="#dcdcdc" stroke-width="1" fill="none"/><path d="M426 228 H433" stroke="#cfcfcf" stroke-width="1"/><text x="425" y="231.6" text-anchor="end" font-size="10" fill="#222">15K</text><path d="M426 300 H433" stroke="#cfcfcf" stroke-width="1"/><text x="425" y="303.6" text-anchor="end" font-size="10" fill="#222">10K</text><path d="M426 371.5 H433" stroke="#cfcfcf" stroke-width="1"/><text x="425" y="375.1" text-anchor="end" font-size="10" fill="#222">5K</text><path d="M426 443.5 H433" stroke="#cfcfcf" stroke-width="1"/><text x="425" y="447.1" text-anchor="end" font-size="10" fill="#222">0K</text><path d="M434 443.5 H811" stroke="#9a9a9a" stroke-width="1" stroke-dasharray="1 1"/><text transform="translate(395.3 337.5) rotate(-90)" text-anchor="middle" font-size="10" fill="#222">Value</text><clipPath id="pc"><rect x="434" y="182" width="376.5" height="308"/></clipPath><g clip-path="url(#pc)"><rect x="437" y="335" width="18" height="2.00" fill="#3f659f"/><rect x="437" y="337" width="18" height="26.00" fill="#9f3f3f"/><rect x="437" y="363" width="18" height="5.00" fill="#7f9b45"/><rect x="437" y="368" width="18" height="75.00" fill="#684f88"/><text transform="translate(449.8 372) rotate(-90)" text-anchor="end" font-size="10" fill="#fff">5,242.32</text><rect x="461" y="287" width="18" height="2.00" fill="#3f659f"/><rect x="461" y="289" width="18" height="42.00" fill="#9f3f3f"/><rect x="461" y="331" width="18" height="7.00" fill="#7f9b45"/><rect x="461" y="338" width="18" height="105.00" fill="#684f88"/><text transform="translate(473.8 342) rotate(-90)" text-anchor="end" font-size="10" fill="#fff">7,311.41</text><rect x="485" y="219" width="18" height="4.00" fill="#3f659f"/><rect x="485" y="223" width="18" height="55.00" fill="#9f3f3f"/><rect x="485" y="278" width="18" height="11.00" fill="#7f9b45"/><rect x="485" y="289" width="18" height="154.00" fill="#684f88"/><text transform="translate(497.8 293) rotate(-90)" text-anchor="end" font-size="10" fill="#fff">10,728.21</text><text transform="translate(497.8 227) rotate(-90)" text-anchor="end" font-size="10" fill="#fff">3,879.44</text><rect x="509" y="392.75" width="18" height="1.25" fill="#3f659f"/><rect x="509" y="394" width="18" height="9.00" fill="#9f3f3f"/><rect x="509" y="403" width="18" height="2.00" fill="#7f9b45"/><rect x="509" y="405" width="18" height="38.00" fill="#684f88"/><rect x="533" y="346.75" width="18" height="1.00" fill="#3f659f"/><rect x="533" y="347.75" width="18" height="23.25" fill="#9f3f3f"/><rect x="533" y="371" width="18" height="5.00" fill="#7f9b45"/><rect x="533" y="376" width="18" height="67.00" fill="#684f88"/><text transform="translate(545.8 380) rotate(-90)" text-anchor="end" font-size="10" fill="#fff">4,686.61</text><rect x="557" y="313" width="18" height="2.00" fill="#3f659f"/><rect x="557" y="315" width="18" height="45.00" fill="#9f3f3f"/><rect x="557" y="360" width="18" height="5.00" fill="#7f9b45"/><rect x="557" y="365" width="18" height="78.00" fill="#684f88"/><text transform="translate(569.8 369) rotate(-90)" text-anchor="end" font-size="10" fill="#fff">5,433.97</text><text transform="translate(569.8 319) rotate(-90)" text-anchor="end" font-size="10" fill="#fff">3,120.01</text><rect x="581" y="276" width="18" height="3.00" fill="#3f659f"/><rect x="581" y="279" width="18" height="22.75" fill="#9f3f3f"/><rect x="581" y="301.75" width="18" height="9.75" fill="#7f9b45"/><rect x="581" y="311.5" width="18" height="131.50" fill="#684f88"/><text transform="translate(593.8 315.5) rotate(-90)" text-anchor="end" font-size="10" fill="#fff">9,170.92</text><rect x="605" y="440.75" width="18" height="1.25" fill="#3f659f"/><rect x="605" y="442" width="18" height="2.20" fill="#9f3f3f"/><rect x="629" y="215" width="18" height="3.00" fill="#3f659f"/><rect x="629" y="218" width="18" height="87.00" fill="#9f3f3f"/><rect x="629" y="305" width="18" height="9.00" fill="#7f9b45"/><rect x="629" y="314" width="18" height="129.00" fill="#684f88"/><text transform="translate(641.8 318) rotate(-90)" text-anchor="end" font-size="10" fill="#fff">8,978.79</text><text transform="translate(641.8 222) rotate(-90)" text-anchor="end" font-size="10" fill="#fff">6,052.69</text><rect x="653" y="259" width="18" height="3.00" fill="#3f659f"/><rect x="653" y="262" width="18" height="39.00" fill="#9f3f3f"/><rect x="653" y="301" width="18" height="9.00" fill="#7f9b45"/><rect x="653" y="310" width="18" height="133.00" fill="#684f88"/><text transform="translate(665.8 314) rotate(-90)" text-anchor="end" font-size="10" fill="#fff">9,269.78</text><rect x="677" y="374.75" width="18" height="1.00" fill="#3f659f"/><rect x="677" y="375.75" width="18" height="5.25" fill="#9f3f3f"/><rect x="677" y="381" width="18" height="4.50" fill="#7f9b45"/><rect x="677" y="385.5" width="18" height="57.50" fill="#684f88"/><text transform="translate(689.8 389.5) rotate(-90)" text-anchor="end" font-size="10" fill="#fff">4,025.93</text><rect x="701" y="388.75" width="18" height="1.00" fill="#3f659f"/><rect x="701" y="389.75" width="18" height="10.25" fill="#9f3f3f"/><rect x="701" y="400" width="18" height="3.00" fill="#7f9b45"/><rect x="701" y="403" width="18" height="40.00" fill="#684f88"/><rect x="725" y="338" width="18" height="1.50" fill="#3f659f"/><rect x="725" y="339.5" width="18" height="1.25" fill="#9f3f3f"/><rect x="725" y="340.75" width="18" height="6.25" fill="#7f9b45"/><rect x="725" y="347" width="18" height="96.00" fill="#684f88"/><text transform="translate(737.8 351) rotate(-90)" text-anchor="end" font-size="10" fill="#fff">6,679.32</text><rect x="749" y="307" width="18" height="1.75" fill="#3f659f"/><rect x="749" y="308.75" width="18" height="31.25" fill="#9f3f3f"/><rect x="749" y="340" width="18" height="7.00" fill="#7f9b45"/><rect x="749" y="347" width="18" height="96.00" fill="#684f88"/><text transform="translate(761.8 351) rotate(-90)" text-anchor="end" font-size="10" fill="#fff">6,681.58</text><rect x="773" y="315" width="18" height="2.00" fill="#3f659f"/><rect x="773" y="317" width="18" height="42.00" fill="#9f3f3f"/><rect x="773" y="359" width="18" height="6.00" fill="#7f9b45"/><rect x="773" y="365" width="18" height="78.00" fill="#684f88"/><text transform="translate(785.8 369) rotate(-90)" text-anchor="end" font-size="10" fill="#fff">5,459.27</text><rect x="797" y="422.75" width="18" height="1.00" fill="#3f659f"/><rect x="797" y="423.75" width="18" height="3.25" fill="#9f3f3f"/><rect x="797" y="427" width="18" height="1.00" fill="#7f9b45"/><rect x="797" y="428" width="18" height="15.00" fill="#684f88"/></g><text transform="translate(449.9 494.5) rotate(-90)" text-anchor="end" font-size="10" fill="#222">Bib-Shorts</text><path d="M458.5 491 V494" stroke="#dcdcdc" stroke-width="1"/><text transform="translate(473.9 494.5) rotate(-90)" text-anchor="end" font-size="10" fill="#222">Bike Racks</text><path d="M482.5 491 V494" stroke="#dcdcdc" stroke-width="1"/><text transform="translate(497.9 494.5) rotate(-90)" text-anchor="end" font-size="10" fill="#222">Bike Stands</text><path d="M506.5 491 V494" stroke="#dcdcdc" stroke-width="1"/><text transform="translate(521.9 494.5) rotate(-90)" text-anchor="end" font-size="10" fill="#222">Bottles and Cages</text><path d="M530.5 491 V494" stroke="#dcdcdc" stroke-width="1"/><text transform="translate(545.9 494.5) rotate(-90)" text-anchor="end" font-size="10" fill="#222">Bottom Brackets</text><path d="M554.5 491 V494" stroke="#dcdcdc" stroke-width="1"/><text transform="translate(569.9 494.5) rotate(-90)" text-anchor="end" font-size="10" fill="#222">Brakes</text><path d="M578.5 491 V494" stroke="#dcdcdc" stroke-width="1"/><text transform="translate(593.9 494.5) rotate(-90)" text-anchor="end" font-size="10" fill="#222">Caps</text><path d="M602.5 491 V494" stroke="#dcdcdc" stroke-width="1"/><text transform="translate(617.9 494.5) rotate(-90)" text-anchor="end" font-size="10" fill="#222">Chains</text><path d="M626.5 491 V494" stroke="#dcdcdc" stroke-width="1"/><text transform="translate(641.9 494.5) rotate(-90)" text-anchor="end" font-size="10" fill="#222">Cleaners</text><path d="M650.5 491 V494" stroke="#dcdcdc" stroke-width="1"/><text transform="translate(665.9 494.5) rotate(-90)" text-anchor="end" font-size="10" fill="#222">Cranksets</text><path d="M674.5 491 V494" stroke="#dcdcdc" stroke-width="1"/><text transform="translate(689.9 494.5) rotate(-90)" text-anchor="end" font-size="10" fill="#222">Derailleurs</text><path d="M698.5 491 V494" stroke="#dcdcdc" stroke-width="1"/><text transform="translate(713.9 494.5) rotate(-90)" text-anchor="end" font-size="10" fill="#222">Fenders</text><path d="M722.5 491 V494" stroke="#dcdcdc" stroke-width="1"/><text transform="translate(737.9 494.5) rotate(-90)" text-anchor="end" font-size="10" fill="#222">Forks</text><path d="M746.5 491 V494" stroke="#dcdcdc" stroke-width="1"/><text transform="translate(761.9 494.5) rotate(-90)" text-anchor="end" font-size="10" fill="#222">Gloves</text><path d="M770.5 491 V494" stroke="#dcdcdc" stroke-width="1"/><text transform="translate(785.9 494.5) rotate(-90)" text-anchor="end" font-size="10" fill="#222">Handlebars</text><path d="M794.5 491 V494" stroke="#dcdcdc" stroke-width="1"/><text transform="translate(809.9 494.5) rotate(-90)" text-anchor="end" font-size="10" fill="#222">Headsets</text></svg>
<div class="abs" style="left:434px;top:588px;width:377px;height:13px;background:#f3f3f3"></div>
<div class="abs" style="left:434px;top:588px;width:160px;height:13px;background:linear-gradient(#f3f3f3,#dadada);border-right:1px solid #c8c8c8;border-bottom:1px solid #c6c6c6;border-left:1px solid #dedede"></div><div class="card" style="left:822px;top:153px;width:158px;height:115px"><div class="ch" style="height:24px;margin:1px 0 0 1px"></div></div>
<div class="t" style="left:828px;top:160px;letter-spacing:-0.231px;">DueDate</div>
<svg style="left:941px;top:159px" width="18" height="18" viewBox="0 0 18 18"><circle cx="7" cy="7" r="5" fill="none" stroke="#8a8a8a" stroke-width="1.6"/><path d="M10.8 10.9 L15.6 15.4" stroke="#8a8a8a" stroke-width="2.9" stroke-linecap="round"/></svg>
<svg style="left:963.5px;top:164px" width="8" height="4" viewBox="0 0 8 4"><path d="M0 0 H8 L4 4 Z" fill="#8a8a8a"/></svg>
<div class="cb" style="left:828px;top:181px"></div>
<div class="t" style="left:844.5px;top:180px;letter-spacing:0.15px">11/12/2007 12:00:00...</div>
<div class="cb" style="left:828px;top:199px"></div>
<svg style="left:830px;top:201px" width="9" height="9" viewBox="0 0 9 9"><path d="M0.8 4.4 L3.3 7.2 L8.2 0.8" fill="none" stroke="#111" stroke-width="1.9"/></svg>
<div class="t" style="left:844.5px;top:198px;letter-spacing:0.15px">11/13/2007 12:00:00...</div>
<div class="cb" style="left:828px;top:217px"></div>
<svg style="left:830px;top:219px" width="9" height="9" viewBox="0 0 9 9"><path d="M0.8 4.4 L3.3 7.2 L8.2 0.8" fill="none" stroke="#111" stroke-width="1.9"/></svg>
<div class="t" style="left:844.5px;top:216px;letter-spacing:0.15px">11/14/2007 12:00:00...</div>
<div class="cb" style="left:828px;top:235px"></div>
<svg style="left:830px;top:237px" width="9" height="9" viewBox="0 0 9 9"><path d="M0.8 4.4 L3.3 7.2 L8.2 0.8" fill="none" stroke="#111" stroke-width="1.9"/></svg>
<div class="t" style="left:844.5px;top:234px;letter-spacing:0.15px">11/15/2007 12:00:00...</div>
<div class="cb" style="left:828px;top:253px"></div>
<div class="t" style="left:844.5px;top:252px;letter-spacing:0.15px">11/16/2007 12:00:00...</div>
<div class="abs" style="left:964px;top:179px;width:15px;height:89px;background:#f0f0f0"></div>
<div class="abs" style="left:964px;top:243px;width:15px;height:8px;background:#cdcdcd"></div>
<svg style="left:967px;top:185px" width="9" height="6" viewBox="0 0 9 6"><path d="M0.8 5 L4.5 1.3 L8.2 5" fill="none" stroke="#404040" stroke-width="1.6"/></svg>
<svg style="left:967px;top:257px" width="9" height="6" viewBox="0 0 9 6"><path d="M0.8 1 L4.5 4.7 L8.2 1" fill="none" stroke="#404040" stroke-width="1.6"/></svg>
<div class="card" style="left:822px;top:275px;width:158px;height:171px"><div class="ch" style="height:24px;margin:1px 0 0 1px"></div></div>
<div class="t" style="left:828px;top:282px;letter-spacing:-0.374px;">Sales Reason</div>
<svg style="left:941px;top:281px" width="18" height="18" viewBox="0 0 18 18"><circle cx="7" cy="7" r="5" fill="none" stroke="#8a8a8a" stroke-width="1.6"/><path d="M10.8 10.9 L15.6 15.4" stroke="#8a8a8a" stroke-width="2.9" stroke-linecap="round"/></svg>
<svg style="left:963.5px;top:286px" width="8" height="4" viewBox="0 0 8 4"><path d="M0 0 H8 L4 4 Z" fill="#8a8a8a"/></svg>
<div class="cb" style="left:828px;top:304px"></div>
<div class="t" style="left:843.5px;top:303px;letter-spacing:-0.11px;">(All)</div>
<div class="cb" style="left:828px;top:322px"></div>
<div class="t" style="left:843.5px;top:321px;letter-spacing:-0.026px;">Manufacturer</div>
<div class="cb" style="left:828px;top:340px"></div>
<div class="t" style="left:843.5px;top:339px;letter-spacing:-0.239px;">On Promotion</div>
<div class="cb" style="left:828px;top:358px"></div>
<div class="t" style="left:843.5px;top:357px;letter-spacing:-0.042px;">Other</div>
<div class="cb" style="left:828px;top:376px"></div>
<svg style="left:830px;top:378px" width="9" height="9" viewBox="0 0 9 9"><path d="M0.8 4.4 L3.3 7.2 L8.2 0.8" fill="none" stroke="#111" stroke-width="1.9"/></svg>
<div class="t" style="left:843.5px;top:375px;letter-spacing:-0.472px;">Price</div>
<div class="cb" style="left:828px;top:394px"></div>
<svg style="left:830px;top:396px" width="9" height="9" viewBox="0 0 9 9"><path d="M0.8 4.4 L3.3 7.2 L8.2 0.8" fill="none" stroke="#111" stroke-width="1.9"/></svg>
<div class="t" style="left:843.5px;top:393px;letter-spacing:-0.062px;">Quality</div>
<div class="cb" style="left:828px;top:412px"></div>
<div class="t" style="left:843.5px;top:411px;letter-spacing:-0.228px;">Review</div>
<div class="cb" style="left:828px;top:430px"></div>
<div class="t" style="left:843.5px;top:429px;letter-spacing:-0.057px;">Television  Advertisement</div>
<div class="abs" style="left:220px;top:606px;width:768px;height:1px;background:#a8a8a8"></div>
<div class="abs" style="left:220px;top:607px;width:768px;height:31px;background:#ececec"></div>
<div class="abs" style="left:217px;top:637px;width:771px;height:1px;background:#e4e4e4"></div><div class="abs" style="left:217px;top:638px;width:771px;height:1px;background:#c4c4c4"></div>
<div class="abs" style="left:8px;top:639px;width:980px;height:22px;background:#f0f0f0"></div>
<svg style="left:228px;top:615px" width="15" height="14" viewBox="0 0 15 14">
<g fill="#8f8f8f"><rect x="0" y="11.8" width="1.8" height="2"/><rect x="3" y="8.5" width="2" height="5.3"/><rect x="6.2" y="6.4" width="2" height="7.4"/><rect x="9.3" y="7.6" width="2" height="6.2"/><rect x="12.3" y="7.2" width="2" height="6.6"/></g>
<path d="M10.5 0.0 V7.0 M7.0 3.5 H14.0" stroke="#17a046" stroke-width="3"/><path d="M10.5 1.1 V5.9 M8.1 3.5 H12.9" stroke="#8cf0a2" stroke-width="1.1"/></svg>
<svg style="left:252.5px;top:615px" width="15" height="14" viewBox="0 0 15 14">
<g fill="#8f8f8f"><rect x="0" y="0" width="4" height="4"/><rect x="5" y="0" width="1.6" height="1"/><rect x="5" y="0" width="1" height="4"/><rect x="0" y="5" width="4" height="4"/><rect x="5" y="5" width="4" height="4"/><rect x="10" y="7.6" width="4" height="1.2"/><rect x="13" y="6.8" width="1" height="2"/><rect x="0" y="10" width="4" height="4"/><rect x="5" y="10" width="4" height="4"/><rect x="10" y="10" width="4" height="4"/></g>
<path d="M10.7 0.0 V7.0 M7.199999999999999 3.5 H14.2" stroke="#17a046" stroke-width="3"/><path d="M10.7 1.1 V5.9 M8.299999999999999 3.5 H13.1" stroke="#8cf0a2" stroke-width="1.1"/></svg>
<div class="abs" style="left:277.5px;top:616.3px;width:15px;height:10.4px;background:repeating-linear-gradient(#858585 0 1.6px,transparent 1.6px 3.03px)"></div>
<div class="abs" style="left:304px;top:607px;width:142px;height:30px;background:#999"></div>
<div class="t" style="left:309px;top:615px;font-weight:bold;font-size:12px;letter-spacing:-0.17px;color:#111">ProdCategory Profit</div>
<svg style="left:431px;top:620px" width="8" height="4" viewBox="0 0 8 4"><path d="M0 0 H8 L4 4 Z" fill="#888"/></svg>
<div class="abs" style="left:446px;top:607px;width:92px;height:30px;background:#c2c2c2;border-right:1px solid #8f8f8f"></div>
<div class="t" style="left:453px;top:615px;letter-spacing:-0.095px;">Worksheet 2</div>
<svg style="left:523.5px;top:620px" width="8" height="4" viewBox="0 0 8 4"><path d="M0 0 H8 L4 4 Z" fill="#8a8a8a"/></svg>
<div class="abs" style="left:539px;top:607px;width:92px;height:30px;background:#66d9ef;border-right:1px solid #8f8f8f"></div>
<div class="t" style="left:545px;top:615px;letter-spacing:-0.05px;">Worksheet 3</div>
<svg style="left:615.5px;top:620px" width="8" height="4" viewBox="0 0 8 4"><path d="M0 0 H8 L4 4 Z" fill="#8a8a8a"/></svg>
<div class="abs" style="left:638px;top:615px;width:14px;height:14px;background:repeating-linear-gradient(90deg,#9a9a9a 0 4px,transparent 4px 5px);-webkit-mask:repeating-linear-gradient(#000 0 4px,transparent 4px 5px);mask:repeating-linear-gradient(#000 0 4px,transparent 4px 5px)"></div>
<div class="t" style="left:656.5px;top:615px;letter-spacing:-0.181px;">Dashboard 1</div>
<svg style="left:727px;top:620px" width="8" height="4" viewBox="0 0 8 4"><path d="M0 0 H8 L4 4 Z" fill="#8a8a8a"/></svg>
<div class="abs" style="left:741px;top:609px;width:1px;height:27px;background:#9a9a9a"></div>
<div class="abs" style="left:750px;top:615px;width:14px;height:14px;background:repeating-linear-gradient(90deg,#9a9a9a 0 4px,transparent 4px 5px);-webkit-mask:repeating-linear-gradient(#000 0 4px,transparent 4px 5px);mask:repeating-linear-gradient(#000 0 4px,transparent 4px 5px)"></div>
<div class="t" style="left:768.5px;top:615px;letter-spacing:-0.181px;">Dashboard 2</div>
<svg style="left:839px;top:620px" width="8" height="4" viewBox="0 0 8 4"><path d="M0 0 H8 L4 4 Z" fill="#8a8a8a"/></svg>
<div class="abs" style="left:853px;top:609px;width:1px;height:27px;background:#9a9a9a"></div>
</body></html>
